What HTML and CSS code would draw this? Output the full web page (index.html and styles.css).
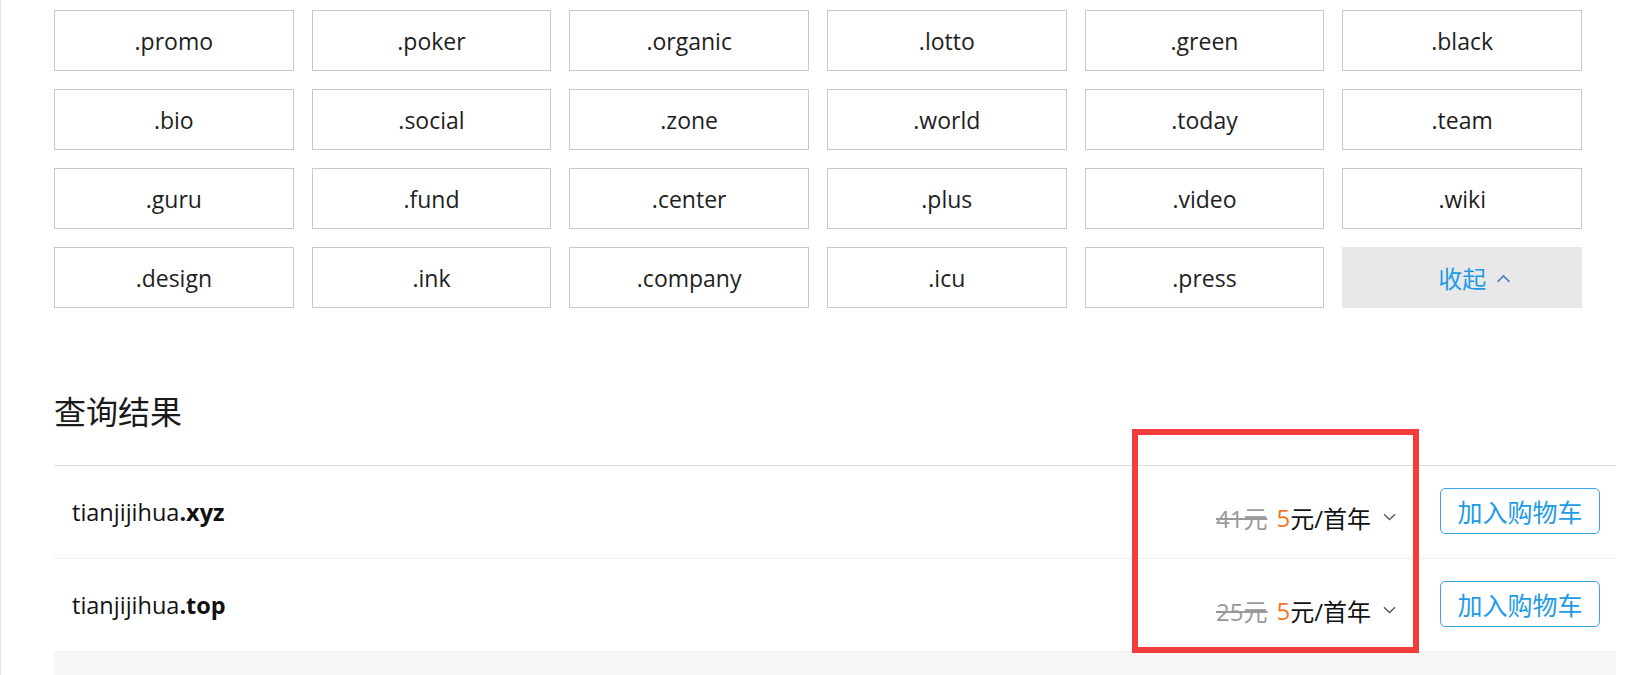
FILE: index.html
```html
<!DOCTYPE html>
<html lang="zh-CN">
<head>
<meta charset="utf-8">
<title>查询结果</title>
<link rel="stylesheet" href="styles.css">
</head>
<body>
<div class="page">
  <div class="suffix-grid">
    <div class="suffix">.promo</div>
    <div class="suffix">.poker</div>
    <div class="suffix">.organic</div>
    <div class="suffix">.lotto</div>
    <div class="suffix">.green</div>
    <div class="suffix">.black</div>
    <div class="suffix">.bio</div>
    <div class="suffix">.social</div>
    <div class="suffix">.zone</div>
    <div class="suffix">.world</div>
    <div class="suffix">.today</div>
    <div class="suffix">.team</div>
    <div class="suffix">.guru</div>
    <div class="suffix">.fund</div>
    <div class="suffix">.center</div>
    <div class="suffix">.plus</div>
    <div class="suffix">.video</div>
    <div class="suffix">.wiki</div>
    <div class="suffix">.design</div>
    <div class="suffix">.ink</div>
    <div class="suffix">.company</div>
    <div class="suffix">.icu</div>
    <div class="suffix">.press</div>
    <div class="suffix collapse">收起<svg class="up" width="15" height="9" viewBox="0 0 15 9"><polyline points="1.5,7.8 7.5,2 13.5,7.8" fill="none" stroke="#4f7fc0" stroke-width="1.7"/></svg></div>
  </div>

  <h2 class="result-title">查询结果</h2>

  <div class="result-list">
    <div class="result-row">
      <div class="domain">tianjijihua<b>.xyz</b></div>
      <div class="price"><s class="old">41元</s> <span class="now">5</span>元/首年<svg class="down" width="13" height="8" viewBox="0 0 13 8"><polyline points="1,1.2 6.5,6.5 12,1.2" fill="none" stroke="#555" stroke-width="1.3"/></svg></div>
      <button class="cart-btn">加入购物车</button>
    </div>
    <div class="result-row">
      <div class="domain">tianjijihua<b>.top</b></div>
      <div class="price"><s class="old">25元</s> <span class="now">5</span>元/首年<svg class="down" width="13" height="8" viewBox="0 0 13 8"><polyline points="1,1.2 6.5,6.5 12,1.2" fill="none" stroke="#555" stroke-width="1.3"/></svg></div>
      <button class="cart-btn">加入购物车</button>
    </div>
    <div class="result-row alt">
      <button class="cart-btn placeholder" aria-label="加入购物车"></button>
    </div>
  </div>

  <div class="highlight"></div>
</div>
</body>
</html>
```

FILE: styles.css
```css
* {
  box-sizing: border-box;
}

html, body {
  margin: 0;
  padding: 0;
  background: #fff;
}

body {
  font-family: "Open Sans", "Noto Sans CJK SC", sans-serif;
  color: #222;
  height: 675px;
  overflow: hidden;
}

.page {
  position: relative;
  border-left: 1px solid #e6e6e6;
  padding: 10px 22px 0 53px;
  height: 675px;
  overflow: hidden;
}

.suffix-grid {
  display: grid;
  grid-template-columns: repeat(6, 1fr);
  grid-auto-rows: 61px;
  gap: 18px;
  margin-right: 34px;
}

.suffix {
  display: flex;
  align-items: center;
  justify-content: center;
  border: 1px solid #c9c9c9;
  font-size: 23px;
  color: #1e1e1e;
  background: #fff;
}

.suffix.collapse {
  background: #e8e8e8;
  border-color: #e8e8e8;
  color: #1e9be6;
  font-family: "Noto Sans CJK SC", sans-serif;
  font-size: 24px;
  padding-left: 25px;
}

.suffix .up {
  margin-left: 10px;
  margin-top: 2px;
}

.result-title {
  margin: 82px 0 35px;
  font-family: "Noto Sans CJK SC", sans-serif;
  font-size: 32px;
  line-height: 40px;
  font-weight: 400;
  color: #1a1a1a;
}

.result-list {
  border-top: 1px solid #dcdcdc;
}

.result-row {
  display: flex;
  align-items: center;
  height: 93px;
  padding: 0 16px 0 18px;
  border-bottom: 1px solid #efefef;
}

.result-row.alt {
  background: #f7f7f7;
  border-bottom: none;
  justify-content: flex-end;
}

.domain {
  font-size: 23.5px;
  color: #111;
}

.domain b {
  font-weight: 700;
}

.price {
  margin-left: auto;
  display: flex;
  align-items: center;
  padding-top: 10px;
  font-size: 24px;
  color: #111;
  font-family: "Open Sans", "Noto Sans CJK SC", sans-serif;
}

.price .old {
  color: #999;
  margin-right: 9px;
}

.price .now {
  color: #f5751f;
}

.price .down {
  margin-left: 12px;
}

.cart-btn {
  margin-left: 44px;
  width: 160px;
  height: 46px;
  border: 1px solid #3ea6ea;
  border-radius: 5px;
  background: #fff;
  color: #1e9be6;
  font-family: "Noto Sans CJK SC", sans-serif;
  font-size: 25px;
  padding: 0;
  margin-top: -2px;
}

.highlight {
  position: absolute;
  left: 1131px;
  top: 429px;
  width: 287px;
  height: 224px;
  border: 6px solid #f43c3c;
  pointer-events: none;
}
```
